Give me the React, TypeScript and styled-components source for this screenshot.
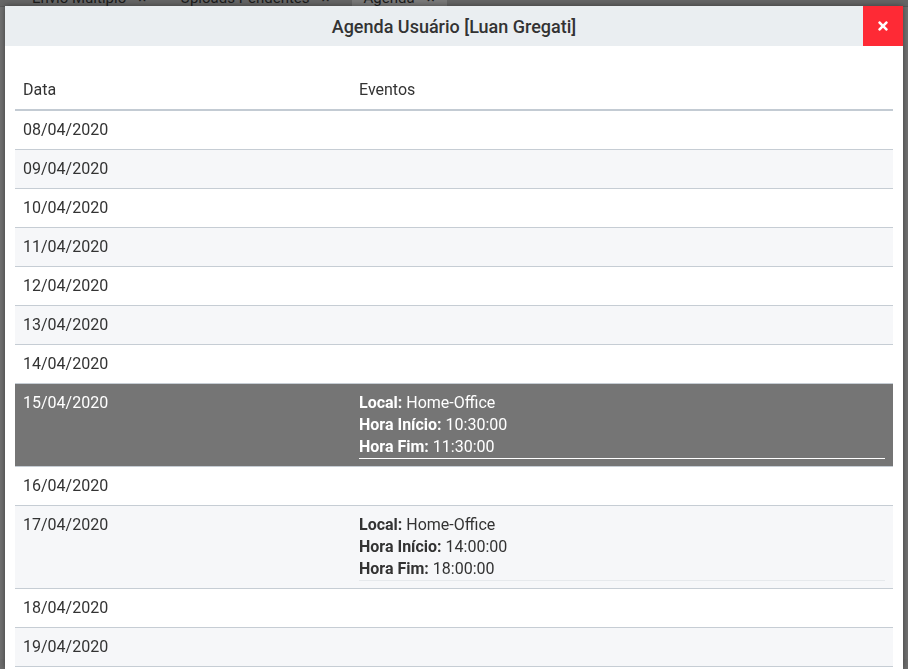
import React from 'react';
import styled, { createGlobalStyle } from 'styled-components';
import { FaTimes } from 'react-icons/fa';

const GlobalStyle = createGlobalStyle`
    html, body {
        margin: 0;
        padding: 0;
        height: 100%;
        overflow: hidden;
        background: #6f6f6f;
        font-family: Roboto, "Liberation Sans", Arial, sans-serif;
    }
`;

const Page = styled.div`
    height: 669px;
    background: #717171;
`;

const TabBar = styled.div`
    display: flex;
    height: 16px;
    margin-top: -10px;
    padding-left: 20px;
    background: #666;
    border-bottom: 1px solid #5a5a5a;
`;

const Tab = styled.div<{ $active?: boolean }>`
    display: flex;
    align-items: flex-end;
    gap: 12px;
    padding: 0 12px;
    font-size: 15px;
    line-height: 16px;
    color: #1c1c1c;
    background: ${p => (p.$active ? '#7a7a7a' : 'transparent')};
    margin-right: 10px;
`;

const Dialog = styled.div`
    position: fixed;
    top: 6px;
    left: 5px;
    width: 898px;
    bottom: 0;
    background: #fff;
    box-shadow: 0 0 6px rgba(0, 0, 0, 0.45);
    display: flex;
    flex-direction: column;
    overflow: hidden;
`;

const DialogHeader = styled.div`
    position: relative;
    height: 40px;
    flex-shrink: 0;
    background: #eaeef1;
    display: flex;
    align-items: center;
    justify-content: center;
`;

const Title = styled.h2`
    margin: 0;
    font-size: 18px;
    font-weight: 500;
    color: #333;
`;

const CloseButton = styled.button`
    position: absolute;
    top: 0;
    right: 0;
    width: 40px;
    height: 40px;
    border: none;
    background: #fe2a35;
    color: #fff;
    display: flex;
    align-items: center;
    justify-content: center;
    cursor: pointer;
    padding: 0;
`;

const DialogBody = styled.div`
    padding: 25px 10px 0;
`;

const Table = styled.table`
    width: 100%;
    table-layout: fixed;
    border-collapse: collapse;
    font-size: 16px;
    color: #333;
`;

const HeadCell = styled.th<{ $width?: number }>`
    text-align: left;
    font-weight: 400;
    padding: 9px 8px;
    line-height: 20px;
    border-bottom: 2px solid #c3cbd3;
    width: ${p => (p.$width ? `${p.$width}px` : 'auto')};
`;

const Row = styled.tr<{ $striped: boolean; $selected: boolean }>`
    background: ${p => (p.$selected ? '#757575' : p.$striped ? '#f6f7f9' : '#fff')};
    color: ${p => (p.$selected ? '#fff' : '#333')};
    border-bottom: 1px solid #c6cdd4;
`;

const Cell = styled.td`
    padding: 9px 8px;
    line-height: 20px;
    vertical-align: top;
`;

const EventCell = styled.td`
    padding: 8px 8px 7px;
    vertical-align: top;
`;

const EventBlock = styled.div<{ $selected: boolean }>`
    line-height: 22px;
    border-bottom: 1px solid ${p => (p.$selected ? '#fff' : '#e6e9ec')};

    b {
        font-weight: 700;
    }
`;

type Evento = { local: string; inicio: string; fim: string };
type Dia = { data: string; eventos: Evento[] };

const dias: Dia[] = [
    { data: '08/04/2020', eventos: [] },
    { data: '09/04/2020', eventos: [] },
    { data: '10/04/2020', eventos: [] },
    { data: '11/04/2020', eventos: [] },
    { data: '12/04/2020', eventos: [] },
    { data: '13/04/2020', eventos: [] },
    { data: '14/04/2020', eventos: [] },
    { data: '15/04/2020', eventos: [{ local: 'Home-Office', inicio: '10:30:00', fim: '11:30:00' }] },
    { data: '16/04/2020', eventos: [] },
    { data: '17/04/2020', eventos: [{ local: 'Home-Office', inicio: '14:00:00', fim: '18:00:00' }] },
    { data: '18/04/2020', eventos: [] },
    { data: '19/04/2020', eventos: [] },
    { data: '20/04/2020', eventos: [] },
    { data: '21/04/2020', eventos: [] },
];

const selecionado = '15/04/2020';

const App: React.FC = () => {
    return (
        <>
            <GlobalStyle />
            <Page>
                <TabBar>
                    <Tab>Envio Múltiplo <span>×</span></Tab>
                    <Tab>Uploads Pendentes <span>×</span></Tab>
                    <Tab $active>Agenda <span>×</span></Tab>
                </TabBar>
            </Page>
            <Dialog>
                <DialogHeader>
                    <Title>Agenda Usuário [Luan Gregati]</Title>
                    <CloseButton aria-label="Fechar">
                        <FaTimes size={14} />
                    </CloseButton>
                </DialogHeader>
                <DialogBody>
                    <Table>
                        <thead>
                            <tr>
                                <HeadCell $width={320}>Data</HeadCell>
                                <HeadCell>Eventos</HeadCell>
                            </tr>
                        </thead>
                        <tbody>
                            {dias.map((dia, i) => {
                                const selected = dia.data === selecionado;
                                return (
                                    <Row key={dia.data} $striped={i % 2 === 1} $selected={selected}>
                                        <Cell>{dia.data}</Cell>
                                        {dia.eventos.length > 0 ? (
                                            <EventCell>
                                                {dia.eventos.map((ev, j) => (
                                                    <EventBlock key={j} $selected={selected}>
                                                        <div><b>Local:</b> {ev.local}</div>
                                                        <div><b>Hora Início:</b> {ev.inicio}</div>
                                                        <div><b>Hora Fim:</b> {ev.fim}</div>
                                                    </EventBlock>
                                                ))}
                                            </EventCell>
                                        ) : (
                                            <Cell />
                                        )}
                                    </Row>
                                );
                            })}
                        </tbody>
                    </Table>
                </DialogBody>
            </Dialog>
        </>
    );
};

export default App;
